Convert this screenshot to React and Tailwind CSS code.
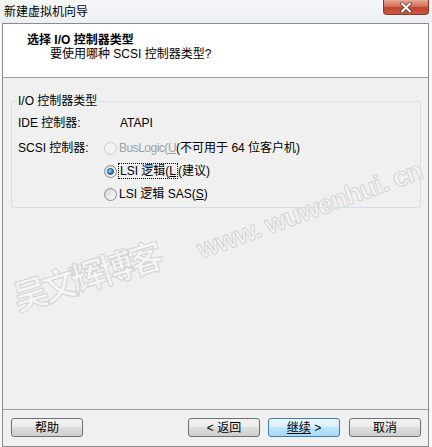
import React from "react";

const FONT = "font-['Liberation_Sans','Noto_Sans_CJK_SC',sans-serif]";

const Radio = ({ checked, disabled }) => (
  <span
    className={`flex h-[13px] w-[13px] shrink-0 items-center justify-center rounded-full border ${
      disabled
        ? "border-[#cdcdcd] bg-[#f3f3f3]"
        : "border-[#8a8b8b] bg-gradient-to-br from-[#d4d4d4] to-[#ffffff]"
    }`}
  >
    {checked && (
      <span className="h-[7px] w-[7px] rounded-full border border-[#1b4f7d] bg-[radial-gradient(circle_at_35%_35%,#9fe0ff,#1e78bf_65%,#0f4b85)]" />
    )}
  </span>
);

const Button = ({ children, primary, className = "" }) => (
  <button
    className={`flex h-[19px] w-[72px] items-center justify-center rounded-[3px] border text-[12px] leading-none text-black ${
      primary
        ? "border-[#3c7fb1] bg-[linear-gradient(#eaf6fd_0%,#d9f0fc_50%,#bee6fd_50%,#a7d9f5_100%)]"
        : "border-[#707070] bg-[linear-gradient(#f2f2f2_0%,#ebebeb_50%,#dddddd_50%,#cfcfcf_100%)]"
    } ${className}`}
  >
    {children}
  </button>
);

export default function App() {
  return (
    <div className={`relative h-[447px] w-[432px] overflow-hidden bg-[#f6f8fa] text-[12px] text-black ${FONT}`}>
      {/* title bar */}
      <div className="flex h-[23px] items-center bg-gradient-to-b from-[#f4f6f8] to-[#eceff2] pl-[4px]">
        <span className="leading-none">新建虚拟机向导</span>
      </div>

      {/* close button */}
      <div className="absolute left-[383px] top-0 flex h-[15px] w-[46px] items-center justify-center rounded-b-[4px] border border-t-0 border-[#8a3528] bg-[linear-gradient(#e9a896_0%,#d2705d_45%,#c0432d_55%,#c95a3f_100%)]">
        <svg width="14" height="11" viewBox="0 0 14 11">
          <path d="M3 1.5 L11 9.5 M11 1.5 L3 9.5" stroke="#5a3a36" strokeWidth="3.6" strokeLinecap="round" />
          <path d="M3 1.5 L11 9.5 M11 1.5 L3 9.5" stroke="#ffffff" strokeWidth="2" strokeLinecap="round" />
        </svg>
      </div>

      {/* client */}
      <div className="ml-[2px] flex h-[424px] w-[427px] flex-col border border-[#8c8c8c]">
        {/* header */}
        <div className="h-[53px] bg-white pt-[9px] leading-[14px]">
          <div className="pl-[24px] font-bold">选择 I/O 控制器类型</div>
          <div className="pl-[47px]">要使用哪种 SCSI 控制器类型?</div>
        </div>
        <div className="h-px bg-[#a0a0a0]" />

        {/* body */}
        <div className="relative h-[331px] bg-[#f0f0f0] pt-[16px]">
          {/* watermark */}
          <div className="pointer-events-none absolute left-[8px] top-[174px] -rotate-[17deg] whitespace-nowrap text-[35px] font-bold tracking-[-5px] text-[#f5f5f5] [-webkit-text-stroke:1px_#d4d4d4]">
            吴文辉博客
          </div>
          <div className="pointer-events-none absolute left-[188px] top-[112px] -rotate-[20deg] whitespace-nowrap text-[27px] font-bold tracking-[-1px] text-[#f5f5f5] [-webkit-text-stroke:1px_#d4d4d4]">
            www. wuwenhui. cn
          </div>

          <fieldset className="relative ml-[8px] w-[410px] rounded-[3px] border border-[#d5dfe5] pb-[3px] pl-[6px]">
            <legend className="-ml-[1px] px-[1px] leading-[14px]">I/O 控制器类型</legend>
            <div className="mt-[5px] flex h-[20px] items-center">
              <span className="w-[102px]">IDE 控制器:</span>
              <span>ATAPI</span>
            </div>
            <div className="mt-[5px] flex h-[20px] items-center">
              <span className="w-[86px]">SCSI 控制器:</span>
              <Radio disabled />
              <span className="ml-[2px] whitespace-nowrap tracking-[-0.5px] text-[#a0a0a0]">
                BusLogic(<span className="underline">U</span>
              </span>
              <span className="whitespace-nowrap">(不可用于 64 位客户机)</span>
            </div>
            <div className="mt-[3px] flex h-[20px] items-center pl-[86px]">
              <Radio checked />
              <span className="ml-[1px] flex h-[16px] items-center border border-dotted border-black px-[1px] whitespace-nowrap">
                LSI 逻辑(<span className="underline">L</span>
              </span>
              <span className="whitespace-nowrap">(建议)</span>
            </div>
            <div className="mt-[3px] flex h-[20px] items-center pl-[86px]">
              <Radio />
              <span className="ml-[2px] whitespace-nowrap">
                LSI 逻辑 SAS(<span className="underline">S</span>)
              </span>
            </div>
          </fieldset>
        </div>
        <div className="h-px bg-[#a0a0a0]" />

        {/* footer */}
        <div className="flex h-[36px] items-start bg-[#f0f0f0] pl-[8px] pt-[8px]">
          <Button>帮助</Button>
          <Button className="ml-[105px]">&lt; 返回</Button>
          <Button primary className="ml-[8px]">
            <span className="underline">继续</span>&nbsp;&gt;
          </Button>
          <Button className="ml-[9px]">取消</Button>
        </div>
      </div>
    </div>
  );
}
